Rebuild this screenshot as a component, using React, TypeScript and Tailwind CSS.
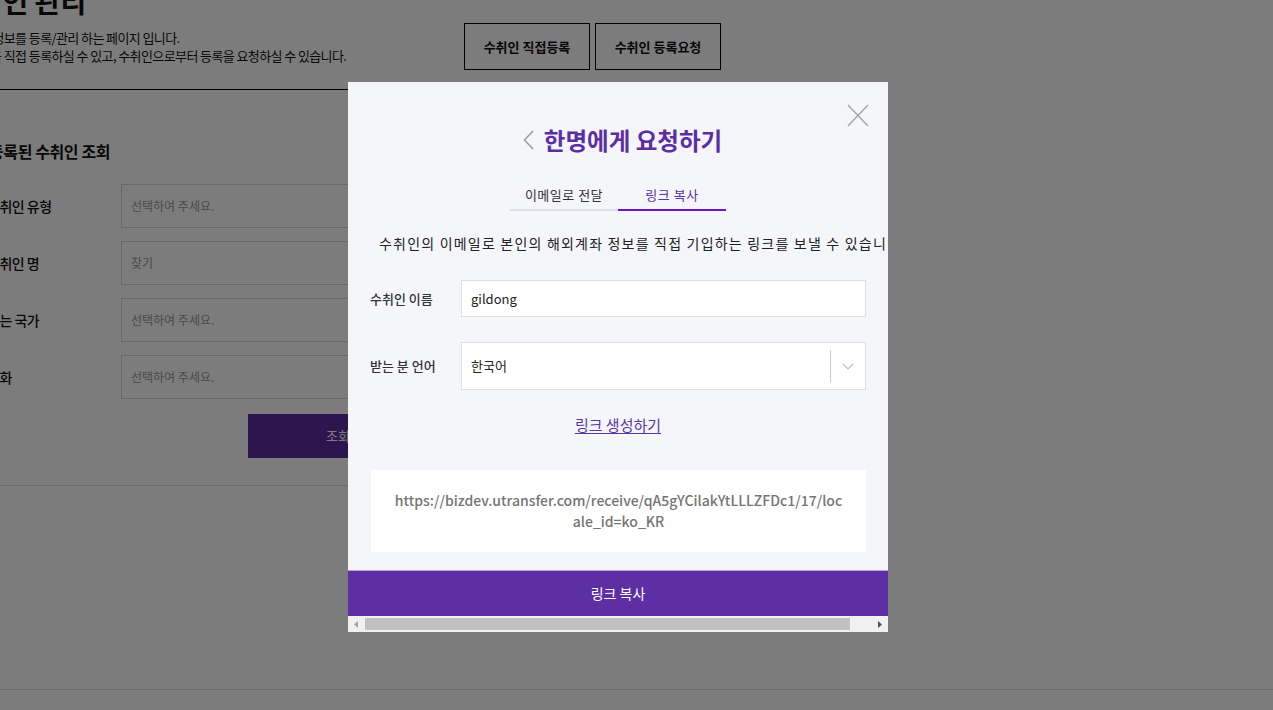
import React from 'react';

const rows = [
  { label: '수취인 유형', placeholder: '선택하여 주세요.' },
  { label: '수취인 명', placeholder: '찾기' },
  { label: '받는 국가', placeholder: '선택하여 주세요.' },
  { label: '통화', placeholder: '선택하여 주세요.' },
];

const App: React.FC = () => {
  return (
    <div className="relative w-[1273px] h-[710px] overflow-hidden bg-white font-['Noto_Sans_CJK_KR','Noto_Sans',sans-serif] text-[#111]">
      {/* page behind the dialog */}
      <div className="h-[689px]">
        <div className="ml-[-44px] w-[765px]">
          <div className="flex items-start justify-between h-[90px] border-b border-black">
            <div>
              <h1 className="ml-[-5px] mt-[-13px] text-[28px] font-bold leading-[28px]">수취인 관리</h1>
              <p className="mt-[14px] text-[13px] leading-[18px] tracking-[-0.6px]">수취인 정보를 등록/관리 하는 페이지 입니다.</p>
              <p className="text-[13px] leading-[18px] tracking-[-0.6px]">수취인을 직접 등록하실 수 있고, 수취인으로부터 등록을 요청하실 수 있습니다.</p>
            </div>
            <div className="flex gap-[5px] mt-[23px]">
              <button className="w-[126px] h-[47px] border border-black text-[13px] font-bold">수취인 직접등록</button>
              <button className="w-[126px] h-[47px] border border-black text-[13px] font-bold">수취인 등록요청</button>
            </div>
          </div>

          <div className="pl-[31px]">
            <h2 className="ml-[2px] mt-[49px] text-[16px] font-bold leading-[24px] tracking-[-0.4px]">등록된 수취인 조회</h2>
            <div className="mt-[21px] flex flex-col gap-[13px]">
              {rows.map(r => (
                <div key={r.label} className="flex items-center">
                  <div className="w-[134px] text-[14px] tracking-[-0.5px] font-medium">{r.label}</div>
                  <div className="flex-1 h-[44px] border border-[#d5d5d5] flex items-center px-[9px] text-[12px] text-[#999]">{r.placeholder}</div>
                </div>
              ))}
            </div>
            <button className="ml-[261px] mt-[15px] w-[180px] h-[44px] bg-[#5e2ea5] text-white text-[13px]">조회</button>
          </div>
          <div className="mt-[27px] border-t border-[#dcdcdc]" />
        </div>
      </div>
      <div className="border-t border-[#dcdcdc]" />

      {/* dim overlay */}
      <div className="absolute inset-0 bg-[rgba(0,0,0,0.513)]" />

      {/* dialog */}
      <div className="absolute left-[348px] top-[82px] w-[540px] h-[550px] bg-[#f5f6fa] overflow-hidden flex flex-col">
        <button className="absolute left-[499px] top-[22px] w-[22px] h-[23px]">
          <svg width="22" height="23" viewBox="0 0 22 23">
            <path d="M1 1 L21 22 M21 1 L1 22" stroke="#a5a5a5" strokeWidth="1.4" fill="none" />
          </svg>
        </button>

        <div className="flex items-center justify-center pt-[43px] pl-[9px] h-[73px]">
          <svg width="11" height="20" viewBox="0 0 11 20" className="mr-[10px]">
            <polyline points="10,1 1.5,10 10,19" stroke="#9a9a9a" strokeWidth="1.5" fill="none" />
          </svg>
          <span className="text-[23.5px] leading-[30px] font-bold text-[#5c2ea6]">한명에게 요청하기</span>
        </div>

        <div className="mt-[28px] flex justify-center">
          <div className="w-[108px] pt-[2px] pb-[4px] border-b-2 border-[#dcdde5] text-center text-[13px] leading-[20px] tracking-[0.5px] text-[#333]">이메일로 전달</div>
          <div className="w-[108px] pt-[2px] pb-[4px] border-b-2 border-[#6d18c4] text-center text-[13px] leading-[20px] tracking-[0.5px] text-[#5c2ea6]">링크 복사</div>
        </div>

        <p className="mt-[22px] pl-[31px] whitespace-nowrap text-[14px] leading-[20px] tracking-[1.2px] text-[#222]">
          수취인의 이메일로 본인의 해외계좌 정보를 직접 기입하는 링크를 보낼 수 있습니다.
        </p>

        <div className="mt-[27px] px-[22px] flex items-center">
          <div className="w-[91px] text-[13px] font-medium text-[#333]">수취인 이름</div>
          <div className="flex-1 h-[37px] bg-white border border-[#dedede] flex items-center px-[9px] text-[13px] text-[#222]">gildong</div>
        </div>

        <div className="mt-[25px] px-[22px] flex items-center">
          <div className="w-[91px] text-[13px] font-medium text-[#333]">받는 분 언어</div>
          <div className="flex-1 h-[48px] bg-white border border-[#dedede] flex items-center">
            <span className="flex-1 pl-[9px] text-[13px] text-[#222]">한국어</span>
            <span className="w-px h-[32px] bg-[#cccccc]" />
            <span className="w-[34px] flex items-center justify-center">
              <svg width="12" height="7" viewBox="0 0 12 7">
                <polyline points="1,1 6,6 11,1" stroke="#bdbdbd" strokeWidth="1.2" fill="none" />
              </svg>
            </span>
          </div>
        </div>

        <div className="mt-[25px] h-[20px] text-center text-[15px] leading-[20px]">
          <a className="text-[#5a35a8] underline underline-offset-2">링크 생성하기</a>
        </div>

        <div className="mt-[35px] ml-[23px] mr-[22px] h-[82px] bg-white flex flex-col items-center justify-center text-[14px] leading-[21px] font-medium text-[#757575]">
          <span>https://bizdev.utransfer.com/receive/qA5gYCilakYtLLLZFDc1/17/loc</span>
          <span>ale_id=ko_KR</span>
        </div>

        <button className="mt-[18px] h-[46px] border-t border-[#b7a2dc] bg-[#5e2ea5] text-white text-[14px]">링크 복사</button>

        <div className="h-[16px] bg-[#f1f1f1] flex items-center">
          <span className="w-[16px] flex justify-center">
            <svg width="4" height="7" viewBox="0 0 4 7"><polygon points="4,0 0,3.5 4,7" fill="#a3a3a3" /></svg>
          </span>
          <span className="ml-px w-[485px] h-[12px] bg-[#c1c1c1]" />
          <span className="flex-1" />
          <span className="w-[16px] flex justify-center">
            <svg width="4" height="7" viewBox="0 0 4 7"><polygon points="0,0 4,3.5 0,7" fill="#505050" /></svg>
          </span>
        </div>
      </div>
    </div>
  );
};

export default App;
